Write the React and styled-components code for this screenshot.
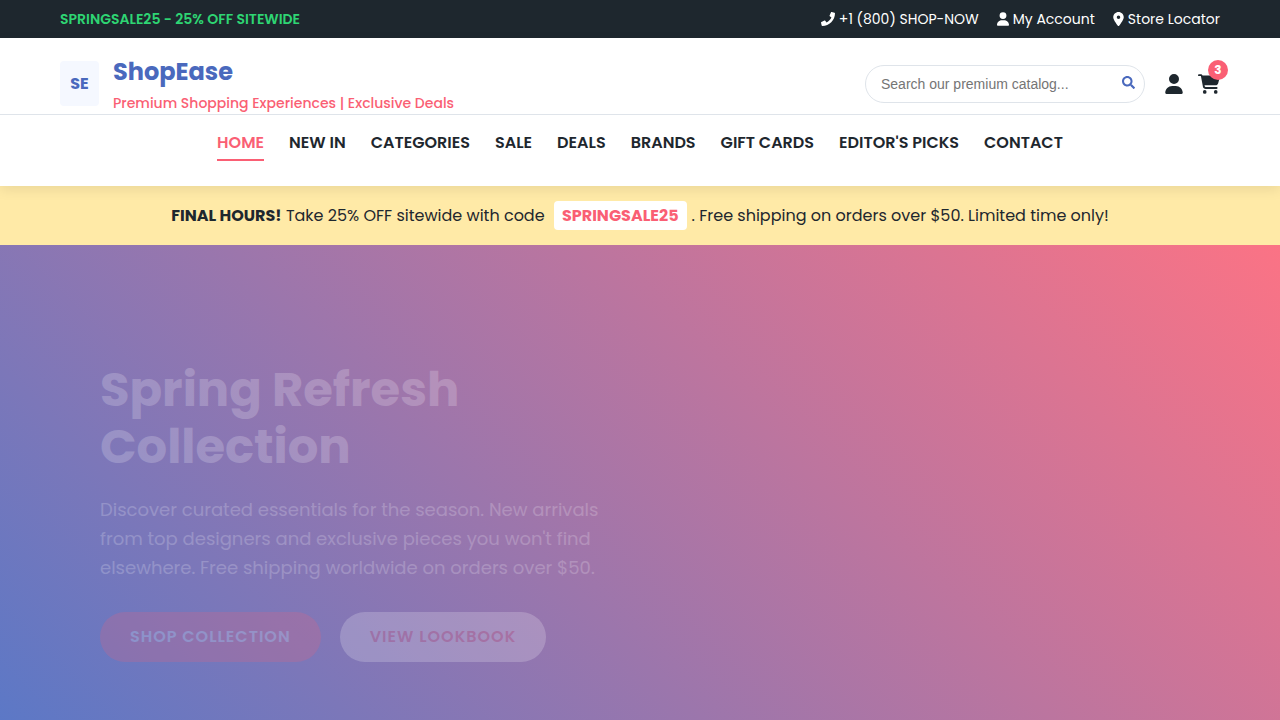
import styled, { createGlobalStyle, css } from "styled-components"
import { FaPhone, FaSearch } from "react-icons/fa"
import { FaUser, FaLocationDot, FaCartShopping } from "react-icons/fa6"

const GlobalStyle = createGlobalStyle`
    * {
        box-sizing: border-box;
        margin: 0;
        padding: 0;
    }
    body {
        font-family: Poppins, Inter, "Open Sans", sans-serif;
        font-size: 16px;
        color: #1e272e;
        background: #fff;
        overflow-x: hidden;
    }
    a {
        color: inherit;
        text-decoration: none;
    }
    button {
        font-family: inherit;
        border: none;
        background: none;
        cursor: pointer;
    }
    `
const Page = styled.div`
    min-height: 100vh;
    display: flex;
    flex-direction: column;
    `
const TopBar = styled.div`
    display: flex;
    justify-content: space-between;
    align-items: center;
    height: 38px;
    padding: 0 60px;
    background: #1e272e;
    color: #fff;
    font-size: 14px;
    `
const Promo = styled.div`
    color: #2ed573;
    font-weight: 600;
    `
const TopLinks = styled.div`
    display: flex;
    gap: 18px;
    `
const TopLink = styled.a`
    display: flex;
    align-items: center;
    gap: 4px;

    svg {
        width: ${props => props.$icon}px;
    }
    `
const Header = styled.header`
    position: relative;
    background: #fff;
    box-shadow: 0 4px 12px rgba(0, 0, 0, .08);
    `
const HeaderMain = styled.div`
    display: flex;
    justify-content: space-between;
    align-items: center;
    height: 77px;
    padding: 15px 60px 0;
    border-bottom: solid 1px #dfe4ea;
    `
const Brand = styled.a`
    display: flex;
    align-items: center;
    gap: 14px;
    `
const LogoMark = styled.div`
    display: flex;
    align-items: center;
    justify-content: center;
    width: 39px;
    height: 45px;
    border-radius: 4px;
    background: #f5f8ff;
    color: #4a69bd;
    font-weight: 700;
    `
const BrandName = styled.div`
    color: #4a69bd;
    font-size: 24px;
    font-weight: 700;
    line-height: 38px;
    `
const Tagline = styled.div`
    color: #fa5f74;
    font-size: 14px;
    font-weight: 500;
    line-height: 24px;
    `
const Actions = styled.div`
    display: flex;
    align-items: center;
    gap: 20px;
    `
const SearchBox = styled.form`
    display: flex;
    align-items: center;
    width: 280px;
    height: 38px;
    padding: 0 9px 0 15px;
    border: solid 1px #dfe4ea;
    border-radius: 20px;
    `
const SearchInput = styled.input`
    flex: 1;
    min-width: 0;
    border: none;
    outline: none;
    background: none;
    font-family: "Liberation Sans", Arial, sans-serif;
    font-size: 14px;

    &::placeholder {
        color: #757575;
    }
    `
const SearchButton = styled.button`
    display: flex;
    padding-bottom: 2px;
    color: #4a69bd;
    font-size: 13px;
    `
const IconGroup = styled.div`
    display: flex;
    gap: 15px;
    `
const IconLink = styled.a`
    position: relative;
    display: flex;
    font-size: 20px;

    svg {
        width: ${props => props.$icon}px;
    }
    `
const Badge = styled.span`
    position: absolute;
    top: -14px;
    right: -8px;
    width: 20px;
    height: 20px;
    border-radius: 50%;
    background: #fa5f74;
    color: #fff;
    font-size: 12px;
    font-weight: 700;
    line-height: 20px;
    text-align: center;
    `
const Nav = styled.nav`
    display: flex;
    justify-content: center;
    gap: 25px;
    height: 71px;
    padding-top: 12px;
    `
const NavLink = styled.a`
    height: 34px;
    font-weight: 600;
    line-height: 32px;
    border-bottom: solid 2px transparent;

    ${props => props.$active && css`
        color: #fa5f74;
        border-color: #fa5f74;
    `}
    `
const Notice = styled.div`
    display: flex;
    justify-content: center;
    align-items: center;
    height: 59px;
    background: #ffeaa7;
    white-space: pre;
    `
const Code = styled.span`
    margin: 0 5px;
    padding: 0 8px;
    border-radius: 4px;
    background: #fff;
    color: #fa5f74;
    font-weight: 700;
    line-height: 29px;
    `
const Hero = styled.section`
    flex: 1;
    padding: 116px 100px 58px;
    background: linear-gradient(45deg, #5c78c6, #fb7385);
    `
const HeroContent = styled.div`
    max-width: 520px;
    opacity: .2;
    color: #fff;
    `
const Title = styled.h1`
    font-size: 48px;
    font-weight: 700;
    line-height: 57px;
    `
const Lead = styled.p`
    margin-top: 20px;
    font-size: 18px;
    line-height: 29px;
    `
const Buttons = styled.div`
    display: flex;
    gap: 19px;
    margin-top: 30px;
    `
const HeroButton = styled.button`
    height: 50px;
    padding: 0 30px 2px;
    border-radius: 25px;
    background: ${props => props.$light ? "#fff" : "#fa5f74"};
    color: ${props => props.$light ? "#fa5f74" : "#fff"};
    font-size: 16px;
    font-weight: 600;
    letter-spacing: 1px;
    `

const navItems = ["HOME", "NEW IN", "CATEGORIES", "SALE", "DEALS", "BRANDS", "GIFT CARDS", "EDITOR'S PICKS", "CONTACT"]

function App() {
    return (
        <Page>
            <GlobalStyle />

            <TopBar>
                <Promo>SPRINGSALE25 - 25% OFF SITEWIDE</Promo>
                <TopLinks>
                    <TopLink href="#phone" $icon={14}><FaPhone /> +1 (800) SHOP-NOW</TopLink>
                    <TopLink href="#account" $icon={12}><FaUser /> My Account</TopLink>
                    <TopLink href="#stores" $icon={11}><FaLocationDot /> Store Locator</TopLink>
                </TopLinks>
            </TopBar>

            <Header>
                <HeaderMain>
                    <Brand href="#home">
                        <LogoMark>SE</LogoMark>
                        <div>
                            <BrandName>ShopEase</BrandName>
                            <Tagline>Premium Shopping Experiences | Exclusive Deals</Tagline>
                        </div>
                    </Brand>
                    <Actions>
                        <SearchBox onSubmit={e => e.preventDefault()}>
                            <SearchInput type="text" aria-label="Search" placeholder="Search our premium catalog..." />
                            <SearchButton type="submit" aria-label="Submit search"><FaSearch /></SearchButton>
                        </SearchBox>
                        <IconGroup>
                            <IconLink href="#account" aria-label="Account" $icon={18}><FaUser /></IconLink>
                            <IconLink href="#cart" aria-label="Cart" $icon={22}>
                                <FaCartShopping />
                                <Badge>3</Badge>
                            </IconLink>
                        </IconGroup>
                    </Actions>
                </HeaderMain>
                <Nav>
                    {navItems.map(item => (
                        <NavLink key={item} href="#" $active={item === "HOME"}>{item}</NavLink>
                    ))}
                </Nav>
            </Header>

            <Notice>
                <strong>FINAL HOURS!</strong> Take 25% OFF sitewide with code <Code>SPRINGSALE25</Code>. Free shipping on orders over $50. Limited time only!
            </Notice>

            <Hero>
                <HeroContent>
                    <Title>Spring Refresh Collection</Title>
                    <Lead>
                        Discover curated essentials for the season. New arrivals from top designers and exclusive pieces you won't find elsewhere. Free shipping worldwide on orders over $50.
                    </Lead>
                    <Buttons>
                        <HeroButton>SHOP COLLECTION</HeroButton>
                        <HeroButton $light>VIEW LOOKBOOK</HeroButton>
                    </Buttons>
                </HeroContent>
            </Hero>
        </Page>
    );
}

export default App;
